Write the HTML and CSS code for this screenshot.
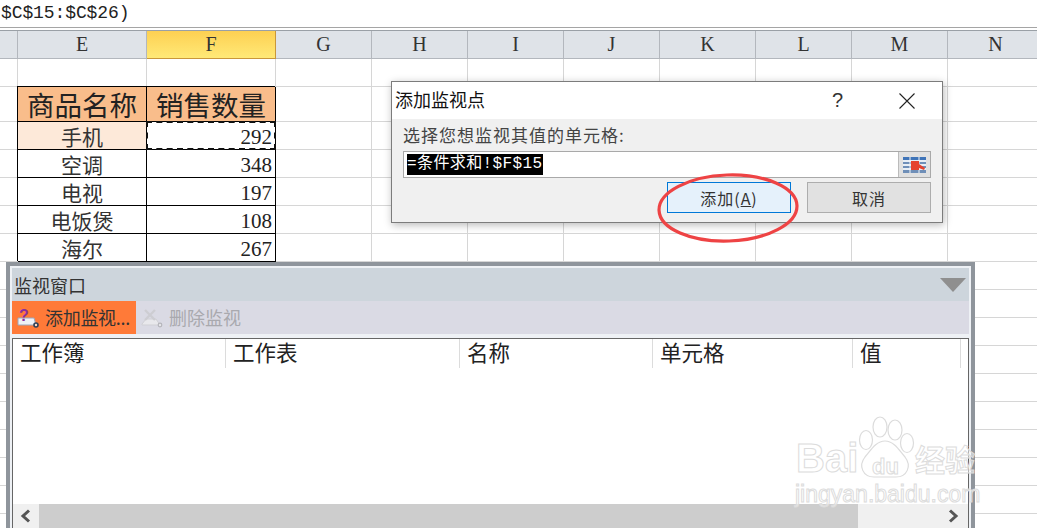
FILE: index.html
```html
<!DOCTYPE html>
<html lang="zh-CN">
<head>
<meta charset="utf-8">
<title>添加监视点</title>
<link rel="stylesheet" href="styles.css">
</head>
<body>
<div class="app">
  <div class="formula">$C$15:$C$26)</div>
  <div class="heads">
    <div class="h"></div><div class="h">E</div><div class="h on">F</div><div class="h">G</div><div class="h">H</div><div class="h">I</div><div class="h">J</div><div class="h">K</div><div class="h">L</div><div class="h">M</div><div class="h">N</div>
  </div>
  <div class="row"><div class="c"></div><div class="c"></div><div class="c"></div><div class="c"></div><div class="c"></div><div class="c"></div><div class="c"></div><div class="c"></div><div class="c"></div><div class="c"></div><div class="c"></div></div>
  <div class="row tall"><div class="c"></div><div class="c d th">商品名称</div><div class="c d th">销售数量</div><div class="c"></div><div class="c"></div><div class="c"></div><div class="c"></div><div class="c"></div><div class="c"></div><div class="c"></div><div class="c"></div></div>
  <div class="row"><div class="c"></div><div class="c d nm first">手机</div><div class="c d num sel">292</div><div class="c"></div><div class="c"></div><div class="c"></div><div class="c"></div><div class="c"></div><div class="c"></div><div class="c"></div><div class="c"></div></div>
  <div class="row"><div class="c"></div><div class="c d nm">空调</div><div class="c d num">348</div><div class="c"></div><div class="c"></div><div class="c"></div><div class="c"></div><div class="c"></div><div class="c"></div><div class="c"></div><div class="c"></div></div>
  <div class="row"><div class="c"></div><div class="c d nm">电视</div><div class="c d num">197</div><div class="c"></div><div class="c"></div><div class="c"></div><div class="c"></div><div class="c"></div><div class="c"></div><div class="c"></div><div class="c"></div></div>
  <div class="row"><div class="c"></div><div class="c d nm">电饭煲</div><div class="c d num">108</div><div class="c"></div><div class="c"></div><div class="c"></div><div class="c"></div><div class="c"></div><div class="c"></div><div class="c"></div><div class="c"></div></div>
  <div class="row"><div class="c"></div><div class="c d nm">海尔</div><div class="c d num">267</div><div class="c"></div><div class="c"></div><div class="c"></div><div class="c"></div><div class="c"></div><div class="c"></div><div class="c"></div><div class="c"></div></div>
  <div class="line"></div><div class="line"></div><div class="line"></div><div class="line"></div><div class="line"></div><div class="line"></div><div class="line"></div><div class="line"></div><div class="line"></div>

  <section class="dialog">
    <header class="dlg-title">
      <span class="dlg-name">添加监视点</span>
      <span class="dlg-help">?</span>
      <svg class="dlg-close" width="16" height="16" viewBox="0 0 16 16"><path d="M0.5 0.5L15.5 15.5M15.5 0.5L0.5 15.5" stroke="#222" stroke-width="1.1" fill="none"/></svg>
    </header>
    <div class="dlg-body">
      <label class="dlg-label">选择您想监视其值的单元格:</label>
      <div class="dlg-input">
        <div class="dlg-field"><span class="picked">=条件求和!$F$15</span></div>
        <div class="dlg-ref">
          <svg width="23" height="16" viewBox="0 0 23 16">
            <rect width="23" height="16" fill="#e8eef5"/>
            <path d="M0 0h23v3H0z" fill="#3f74b8"/>
            <path d="M0 5h23v2H0zM0 9h23v2H0zM0 13h23v3H0z" fill="#6f8fb8"/>
            <path d="M7 0v16M16 0v16" stroke="#f2f5f9" stroke-width="1"/>
            <path d="M8 4h8v3l6 4-1 2-5-2v2H8z" fill="#e5432f"/>
          </svg>
        </div>
      </div>
      <div class="dlg-actions">
        <button class="btn primary">添加(<u>A</u>)</button>
        <button class="btn">取消</button>
      </div>
    </div>
  </section>

  <section class="watch">
    <header class="w-title">
      <span>监视窗口</span>
      <svg width="26" height="14" viewBox="0 0 26 14"><path d="M0 0H26L13 14Z" fill="#8f8f8f"/></svg>
    </header>
    <div class="w-tools">
      <div class="tool active">
        <svg class="ico" width="22" height="20" viewBox="0 0 22 20">
          <path d="M1 10h16l2 7H1z" fill="#eef1f6" stroke="#9aa6bb" stroke-width="1"/>
          <circle cx="19" cy="17" r="2" fill="#ffd9c4" stroke="#2e4057" stroke-width="1.6"/>
          <text x="2" y="13" class="q">?</text>
        </svg>
        <span>添加监视...</span>
      </div>
      <div class="tool off">
        <svg class="ico" width="22" height="20" viewBox="0 0 22 20">
          <path d="M1 16l4-5h10l4 6H1z" fill="#e8e8ec" stroke="#d0d0d5" stroke-width="1"/>
          <path d="M4 2l10 10M14 2L4 12" stroke="#cdcdd2" stroke-width="2.4"/>
          <circle cx="19" cy="17" r="1.800" fill="#e6e6ea" stroke="#b5b5bb" stroke-width="1.2"/>
        </svg>
        <span>删除监视</span>
      </div>
    </div>
    <div class="w-list">
      <div class="w-cols">
        <div class="col a">工作簿</div><div class="col b">工作表</div><div class="col c3">名称</div><div class="col d4">单元格</div><div class="col e5">值</div>
      </div>
      <div class="w-space"></div>
      <div class="w-scroll">
        <div class="arrow"><svg width="12" height="14" viewBox="0 0 12 14"><path d="M9 1.500L3 7l6 5.500" fill="none" stroke="#555" stroke-width="3"/></svg></div>
        <div class="thumb"></div>
        <div class="arrow end"><svg width="12" height="14" viewBox="0 0 12 14"><path d="M3 1.500L9 7l-6 5.500" fill="none" stroke="#555" stroke-width="3"/></svg></div>
      </div>
    </div>
  </section>

  <svg class="ring" width="146" height="74" viewBox="0 0 146 74">
    <ellipse cx="73" cy="37" rx="69" ry="33" transform="rotate(-2 73 37)" fill="none" stroke="#ee4344" stroke-width="3.2"/>
  </svg>

  <div class="mark">
    <svg class="paw" width="62" height="70" viewBox="0 0 62 70">
      <g fill="none" stroke="#dcdcdc" stroke-width="1.2">
        <ellipse cx="22" cy="15" rx="7" ry="10"/>
        <ellipse cx="37" cy="18" rx="7" ry="10"/>
        <ellipse cx="8" cy="28" rx="6.500" ry="9.500"/>
        <ellipse cx="49" cy="31" rx="6.500" ry="9.500"/>
        <path d="M27 29C36 29 41 38 47 45C54 54 49 65 38 65C32 65 22 65 16 65C5 65 0 54 7 45C13 38 18 29 27 29Z"/>
      </g>
    </svg>
    <span class="mk-bai">Bai</span><span class="mk-du">du</span><span class="mk-jy">经验</span>
    <span class="mk-url">jingyan.baidu.com</span>
  </div>
</div>
</body>
</html>
```
FILE: styles.css
```css
* { box-sizing: border-box; }
html, body { margin: 0; padding: 0; background: #fff; }
body {
  width: 1037px;
  height: 528px;
  overflow: hidden;
  font-family: "Noto Sans CJK SC", "Liberation Sans", sans-serif;
  color: #222;
}
.app { position: relative; width: 1037px; height: 528px; overflow: hidden; }

.formula {
  height: 28px;
  padding-left: 1px;
  border-bottom: 1px solid #a5a5a5;
  font: 18px/27px "Liberation Mono", monospace;
  letter-spacing: -.1px;
  color: #222;
  background: #fff;
  margin-bottom: 2px;
}
.heads, .row {
  display: grid;
  grid-template-columns: 18px 129px 129px repeat(8, 96px);
  grid-template-rows: minmax(0, 1fr);
  width: 1130px;
}
.heads {
  height: 29px;
  border-top: 1px solid #9aa0a6;
  background: #dfe3e8;
}
.h {
  border-right: 1px solid #b3b7bd;
  border-bottom: 1px solid #b3b7bd;
  text-align: center;
  font: 20px/27px "Liberation Serif", serif;
  color: #333;
}
.h.on {
  background: linear-gradient(#fdd052, #ffe977);
  border-right-color: #c9973a;
  border-bottom-color: #c9973a;
}
.row { height: 28px; }
.row.tall { height: 35px; }
.c { border-right: 1px solid #d6d6d6; border-bottom: 1px solid #d6d6d6; }
.d {
  border-right-color: #000;
  border-bottom-color: #000;
  box-shadow: -1px -1px 0 #000;
  text-align: center;
}
.th { background: #f9bd8b; font-size: 27.500px; line-height: 35px; white-space: nowrap; }
.nm { font-size: 21px; line-height: 28px; color: #333; }
.first { background: #fde9d9; }
.num {
  text-align: right;
  padding-right: 3px;
  font: 21px/31px "Liberation Serif", serif;
  color: #222;
}
.sel { position: relative; }
.sel::after {
  content: "";
  position: absolute;
  left: -1px;
  top: -1px;
  right: -1px;
  bottom: -1px;
  border: 2px dashed #111;
}
.line { height: 28px; border-bottom: 1px solid #d6d6d6; }

.dialog {
  position: absolute;
  left: 391px;
  top: 81px;
  width: 552px;
  height: 142px;
  border: 1px solid #7c7c7c;
  background: #f0f0f0;
  box-shadow: 1px 2px 8px rgba(0, 0, 0, .28);
  display: flex;
  flex-direction: column;
}
.dlg-title {
  height: 37px;
  background: #fff;
  display: flex;
  align-items: center;
  padding-left: 3px;
}
.dlg-name { font-size: 18px; line-height: 34px; color: #111; flex: 1; align-self: flex-start; }
.dlg-help { font: 20px "Liberation Sans", sans-serif; color: #333; margin-right: 56px; }
.dlg-close { margin-right: 27px; }
.dlg-body { flex: 1; padding: 4px 11px 0; display: flex; flex-direction: column; }
.dlg-label { font-size: 17px; letter-spacing: 1px; line-height: 24px; height: 28px; color: #444; }
.dlg-input {
  height: 27px;
  width: 528px;
  border: 1px solid #a9a9a9;
  display: flex;
  background: #fff;
}
.dlg-field { flex: 1; padding: 2px 3px; font: 16px/21px "Liberation Mono", "Noto Sans CJK SC", monospace; letter-spacing: .4px; }
.picked { background: #000; color: #fff; display: inline-block; height: 21px; white-space: nowrap; }
.dlg-ref {
  width: 32px;
  background: #e1e1e1;
  border-left: 1px solid #bbb;
  display: flex;
  align-items: center;
  justify-content: center;
}
.dlg-actions { display: flex; gap: 16px; margin-top: 4px; padding-left: 264px; }
.btn {
  width: 124px;
  height: 31px;
  padding: 0;
  background: #e1e1e1;
  border: 1px solid #adadad;
  font: 16px "Noto Sans CJK SC", sans-serif;
  letter-spacing: 1px;
  color: #333;
}
.btn.primary { background: #e5f1fb; border-color: #0078d7; }

.watch {
  position: absolute;
  left: 6px;
  top: 262px;
  width: 969px;
  height: 280px;
  border: 4px solid #8f959c;
  border-bottom: 0;
  background: #eef1f5;
  padding: 2px 2px 0;
  display: flex;
  flex-direction: column;
}
.w-title {
  height: 33px;
  flex: none;
  background: #cdd5dc;
  display: flex;
  align-items: center;
  justify-content: space-between;
  padding: 0 3px 0 2px;
  font-size: 18px;
  color: #333;
}
.w-tools { height: 33px; flex: none; background: #dadae4; display: flex; }
.tool { display: flex; align-items: center; height: 33px; font-size: 18px; line-height: 30px; gap: 6px; padding-left: 5px; white-space: nowrap; }
.tool span { height: 32px; }
.tool.active { background: #ff7a38; width: 124px; color: #333; letter-spacing: -.3px; }
.tool.off { color: #a9a9ae; }
.ico { flex: none; }
.q { font: bold 16px "Liberation Sans", sans-serif; fill: #8a2f9e; }
.w-list {
  margin-top: 4px;
  flex: 1;
  background: #fff;
  border: 1px solid #666;
  border-bottom: 0;
  display: flex;
  flex-direction: column;
}
.w-cols { display: flex; height: 29px; flex: none; font-size: 21.500px; line-height: 26px; color: #222; }
.col { border-right: 1px solid #dcdcdc; padding-left: 7px; }
.a { width: 213px; }
.b { width: 234px; }
.c3 { width: 193px; }
.d4 { width: 200px; }
.e5 { width: 108px; }
.w-space { height: 136px; flex: none; }
.w-scroll { display: flex; height: 24px; flex: none; background: #f0f0f0; }
.arrow { width: 26px; display: flex; align-items: center; justify-content: center; flex: none; }
.thumb { width: 819px; background: #cdcdcd; }
.arrow.end { margin-left: auto; width: 30px; }

.ring { position: absolute; left: 655px; top: 171px; }

.mark { position: absolute; left: 790px; top: 412px; width: 195px; height: 96px; pointer-events: none; }
.paw { position: absolute; left: 68px; top: 0; }
.mark span {
  position: absolute;
  color: rgba(255, 255, 255, .5);
  -webkit-text-stroke: 1px #dcdcdc;
  white-space: nowrap;
}
.mk-bai { left: 6px; top: 22px; font: bold 40px/48px "Liberation Sans", sans-serif; }
.mk-du { left: 82px; top: 42px; font: bold 22px/26px "Liberation Sans", sans-serif; }
.mk-jy { left: 125px; top: 24px; font: bold 30px/44px "Noto Sans CJK SC", sans-serif; }
.mk-url { left: 5px; top: 68px; font: 23px/28px "Liberation Sans", sans-serif; }
```
